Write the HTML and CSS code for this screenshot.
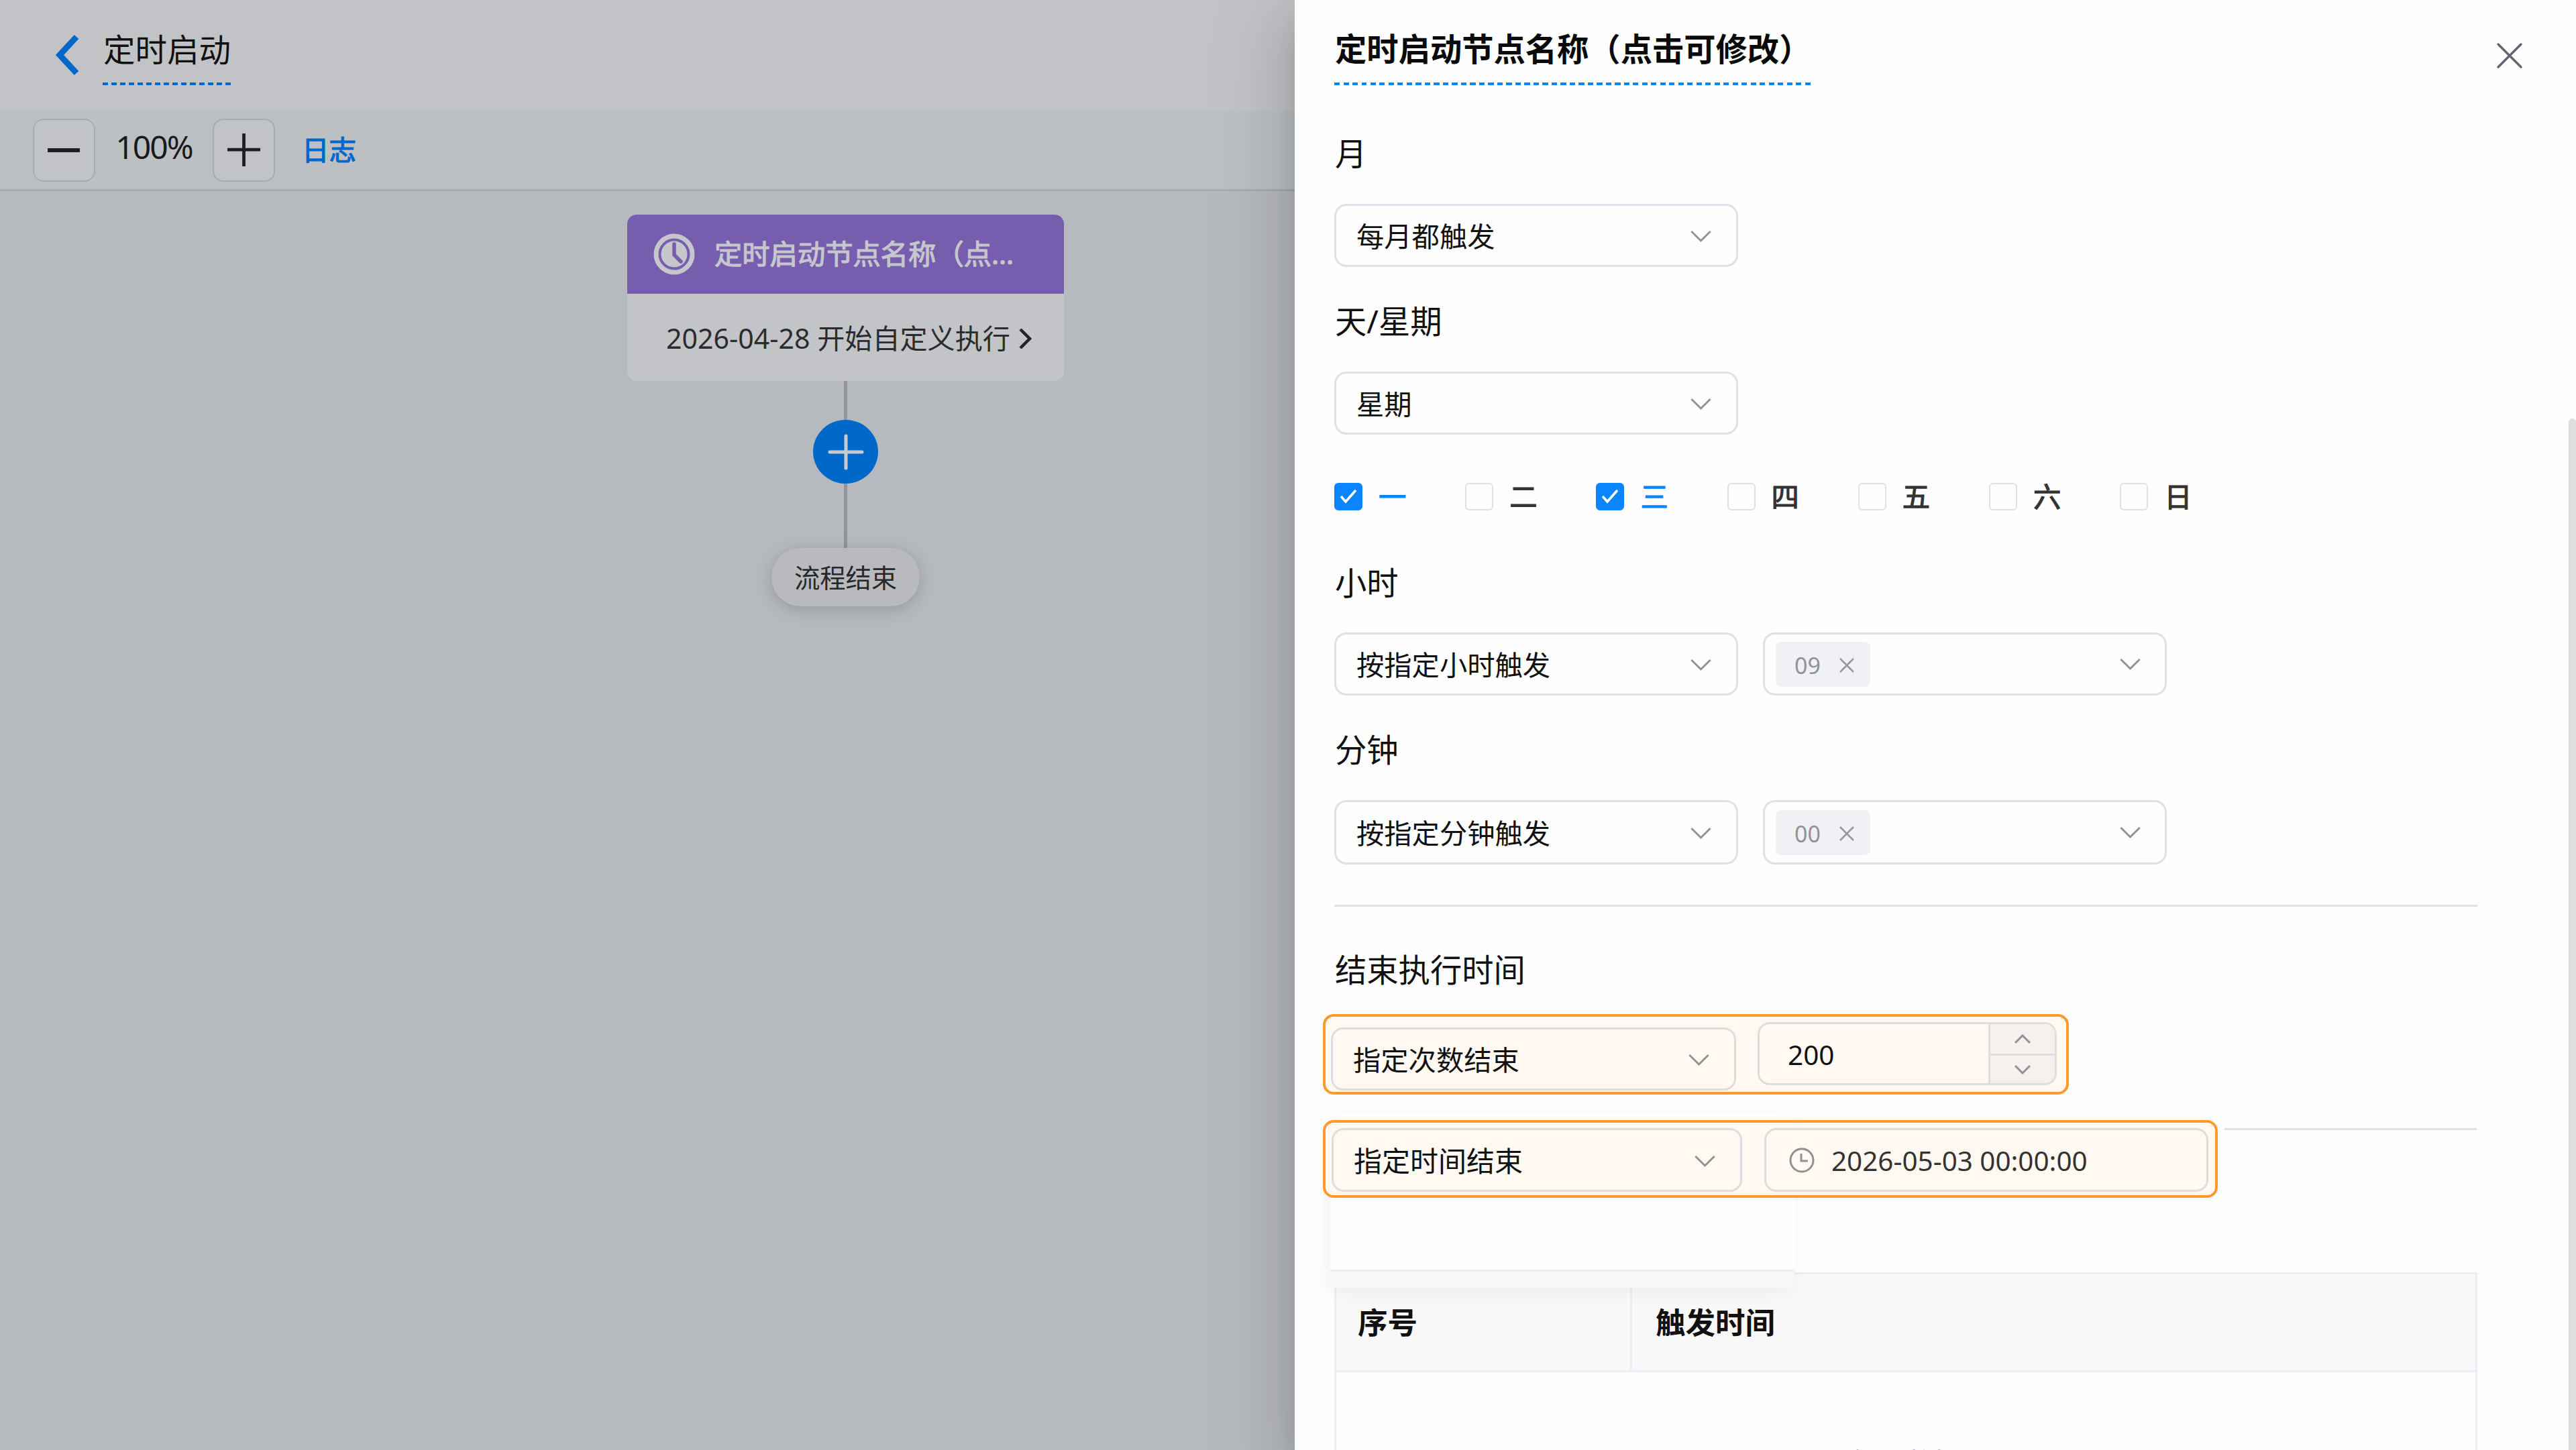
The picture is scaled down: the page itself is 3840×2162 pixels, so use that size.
FILE: index.html
```
<!DOCTYPE html>
<html lang="zh-CN">
<head>
  <meta charset="UTF-8">
  <meta name="viewport" content="width=device-width, initial-scale=1.0">
  <title>定时启动</title>
  <link rel="stylesheet" href="styles.css">
</head>
<body>

  <!-- 流程画布 -->
  <div class="flow">
    <header class="flow-header">
      <svg class="back" viewBox="0 0 36 60"><path d="M32 3 L7 30 L32 57" fill="none" stroke="#0068c9" stroke-width="9"/></svg>
      <span class="flow-name">定时启动</span>
    </header>
    <div class="toolbar">
      <button class="zoom-btn"><svg viewBox="0 0 52 52"><path d="M0 26H50" stroke="#1d1f21" stroke-width="6"/></svg></button>
      <span class="zoom-value">100%</span>
      <button class="zoom-btn"><svg viewBox="0 0 52 52"><path d="M0 25H51M25.5 0V51" stroke="#1d1f21" stroke-width="5"/></svg></button>
      <a class="log">日志</a>
    </div>
    <div class="canvas">
      <div class="node">
        <div class="node-head">
          <svg class="node-clock" viewBox="0 0 62 62">
            <circle cx="31" cy="31" r="27" fill="none" stroke="#c5c7cd" stroke-width="7"/>
            <circle cx="31" cy="31" r="19.5" fill="#c5c7cd"/>
            <path d="M31 16V32L41 42" fill="none" stroke="#775dad" stroke-width="5.5" stroke-linecap="round"/>
          </svg>
          <span>定时启动节点名称（点...</span>
        </div>
        <div class="node-body">
          <span>2026-04-28 开始自定义执行</span>
          <svg viewBox="0 0 20 32"><path d="M2 2L16 16L2 30" fill="none" stroke="#222426" stroke-width="4.5"/></svg>
        </div>
      </div>
      <div class="line line-top"></div>
      <div class="add"><svg viewBox="0 0 52 52"><path d="M2 26H50M26 2V50" stroke="#c9cbce" stroke-width="5" stroke-linecap="round"/></svg></div>
      <div class="line line-bottom"></div>
      <div class="end">流程结束</div>
    </div>
  </div>

  <!-- 定时设置抽屉 -->
  <div class="drawer">
    <div class="drawer-head">
      <h2>定时启动节点名称（点击可修改）</h2>
      <svg class="close" viewBox="0 0 38 38"><path d="M2 2L36 36M36 2L2 36" stroke="#606570" stroke-width="3.4" stroke-linecap="round"/></svg>
    </div>

    <div class="label">月</div>
    <div class="row">
      <div class="select"><span>每月都触发</span><svg class="arrow" viewBox="0 0 32 18"><path d="M1 1L16 16L31 1"/></svg></div>
    </div>

    <div class="label">天/星期</div>
    <div class="row">
      <div class="select"><span>星期</span><svg class="arrow" viewBox="0 0 32 18"><path d="M1 1L16 16L31 1"/></svg></div>
    </div>

    <div class="week">
      <label class="day checked"><i><svg viewBox="0 0 26 22"><path d="M2 11L9 19L24 2"/></svg></i>一</label>
      <label class="day"><i></i>二</label>
      <label class="day checked"><i><svg viewBox="0 0 26 22"><path d="M2 11L9 19L24 2"/></svg></i>三</label>
      <label class="day"><i></i>四</label>
      <label class="day"><i></i>五</label>
      <label class="day"><i></i>六</label>
      <label class="day"><i></i>日</label>
    </div>

    <div class="label label-hour">小时</div>
    <div class="row">
      <div class="select"><span>按指定小时触发</span><svg class="arrow" viewBox="0 0 32 18"><path d="M1 1L16 16L31 1"/></svg></div>
      <div class="select multi">
        <span class="tag">09<svg viewBox="0 0 22 22"><path d="M1 1L21 21M21 1L1 21"/></svg></span>
        <svg class="arrow" viewBox="0 0 32 18"><path d="M1 1L16 16L31 1"/></svg>
      </div>
    </div>

    <div class="label">分钟</div>
    <div class="row row-minute">
      <div class="select"><span>按指定分钟触发</span><svg class="arrow" viewBox="0 0 32 18"><path d="M1 1L16 16L31 1"/></svg></div>
      <div class="select multi">
        <span class="tag">00<svg viewBox="0 0 22 22"><path d="M1 1L21 21M21 1L1 21"/></svg></span>
        <svg class="arrow" viewBox="0 0 32 18"><path d="M1 1L16 16L31 1"/></svg>
      </div>
    </div>

    <div class="divider"></div>

    <div class="label label-end">结束执行时间</div>
    <div class="mark mark-count">
      <div class="select"><span>指定次数结束</span><svg class="arrow" viewBox="0 0 32 18"><path d="M1 1L16 16L31 1"/></svg></div>
      <div class="number">
        <span>200</span>
        <div class="steps">
          <div><svg viewBox="0 0 24 13"><path d="M1 12L12 1L23 12"/></svg></div>
          <div><svg viewBox="0 0 24 13"><path d="M1 1L12 12L23 1"/></svg></div>
        </div>
      </div>
    </div>

    <div class="time-row">
      <div class="mark mark-time">
        <div class="select"><span>指定时间结束</span><svg class="arrow" viewBox="0 0 32 18"><path d="M1 1L16 16L31 1"/></svg></div>
        <div class="picker">
          <svg viewBox="0 0 38 38"><circle cx="19" cy="19" r="17"/><path d="M18 9V20H28"/></svg>
          <span>2026-05-03 00:00:00</span>
        </div>
      </div>
      <div class="divider divider-rest"></div>
      <div class="popup"></div>
    </div>

    <div class="table">
      <div class="thead">
        <div class="th th-index">序号</div>
        <div class="th">触发时间</div>
      </div>
      <div class="tbody">暂无数据</div>
    </div>

    <div class="scrollbar"></div>
  </div>

</body>
</html>
```

FILE: styles.css
```
* {
  box-sizing: border-box;
}

body {
  margin: 0;
  width: 3840px;
  height: 2162px;
  display: flex;
  overflow: hidden;
  font-family: 'Noto Sans', 'Noto Sans CJK SC', sans-serif;
  font-size: 41.3px;
  line-height: 1;
  color: #1a1a1a;
  background: #b6b9be;
}

svg {
  display: block;
  flex: none;
  overflow: visible;
}

/* 左侧画布 */
.flow {
  width: 1930px;
  height: 2162px;
  flex: none;
}

.flow-header {
  height: 166px;
  padding: 52px 0 0 82px;
  display: flex;
  background: #c2c3c6;
}

.back {
  width: 36px;
  height: 60px;
}

.flow-name {
  height: 75px;
  margin-left: 35px;
  font-size: 47.5px;
  line-height: 43px;
  text-indent: 1px;
  color: #111;
  background: repeating-linear-gradient(90deg, #0068c9 0 8px, transparent 8px 13.05px) left bottom / 100% 4px no-repeat;
}

.toolbar {
  height: 119px;
  padding: 11px 0 0 49px;
  display: flex;
  background: #bcc0c3;
  border-bottom: 3px solid #a9abaf;
}

.zoom-btn {
  width: 93px;
  height: 94px;
  padding: 0;
  display: flex;
  align-items: center;
  justify-content: center;
  background: #c2c3c6;
  border: 2px solid #a7abb3;
  border-radius: 16px;
}

.zoom-btn svg {
  width: 50px;
  height: 50px;
}

.zoom-value {
  width: 175px;
  text-align: center;
  font-size: 48px;
  letter-spacing: -2px;
  line-height: 84px;
}

.log {
  margin-left: 40px;
  -webkit-text-stroke: 1.2px currentColor;
  line-height: 93px;
  font-size: 40.5px;
  color: #0068c9;
}

.canvas {
  padding: 35px 0 0 935px;
  display: flex;
  flex-direction: column;
}

.node {
  width: 651px;
  height: 248px;
  border-radius: 14px;
  overflow: hidden;
  background: #c3c4c7;
}

.node-head {
  height: 118px;
  padding-left: 39px;
  display: flex;
  align-items: center;
  background: #775dad;
  color: #c5c7cd;
}

.node-head span {
  -webkit-text-stroke: 1.2px currentColor;
}

.node-head svg {
  width: 62px;
  height: 62px;
  margin-right: 29px;
}

.node-body {
  height: 129px;
  padding: 5px 0 0 58px;
  display: flex;
  align-items: center;
  font-size: 41.1px;
  color: #2a2c2e;
}

.node-body svg {
  width: 20px;
  height: 32px;
  margin-left: 13px;
}

.line {
  width: 5px;
  margin-left: 323px;
  background: #939496;
}

.line-top {
  height: 58px;
}

.line-bottom {
  height: 96px;
}

.add {
  width: 97px;
  height: 95px;
  margin-left: 277px;
  display: flex;
  align-items: center;
  justify-content: center;
  border-radius: 50%;
  background: #0068c9;
}

.add svg {
  width: 52px;
  height: 52px;
}

.end {
  width: 221px;
  height: 87px;
  margin-left: 215px;
  border-radius: 44px;
  background: #b8babd;
  box-shadow: 0 5px 24px rgba(0, 0, 0, 0.18);
  font-size: 38.3px;
  line-height: 88px;
  text-align: center;
  color: #26282a;
}

/* 抽屉 */
.drawer {
  position: relative;
  width: 1910px;
  height: 2162px;
  flex: none;
  padding-left: 59px;
  background: #fefefe;
  box-shadow: 0 38px 110px 38px rgba(0, 0, 0, 0.08), 0 28px 76px rgba(0, 0, 0, 0.12), 0 18px 38px -18px rgba(0, 0, 0, 0.16);
}

.drawer-head {
  height: 189px;
  display: flex;
  justify-content: space-between;
}

.drawer-head h2 {
  width: 710px;
  height: 127px;
  margin: 0;
  padding-top: 49px;
  font-size: 47.3px;
  line-height: 48px;
  font-weight: 700;
  white-space: nowrap;
  text-indent: 1px;
  color: #0a0a0a;
  background: repeating-linear-gradient(90deg, #0a84ff 0 8px, transparent 8px 13.5px) left bottom / 100% 4px no-repeat;
}

.close {
  width: 38px;
  height: 38px;
  margin: 64px 80px 0 0;
}

.label {
  height: 115px;
  padding: 16px 0 0 1px;
  font-size: 47.3px;
  line-height: 48px;
  color: #111;
}

.row {
  display: flex;
  gap: 37px;
  height: 135px;
}

.select,
.picker,
.number {
  width: 602px;
  height: 94px;
  display: flex;
  align-items: center;
  border: 3px solid #dfe1e9;
  border-radius: 18px;
  color: #111;
}

.row-minute .select {
  height: 96px;
}

.select {
  padding: 3px 37px 0 30px;
  justify-content: space-between;
}

.arrow {
  width: 31px;
  height: 17px;
}

.arrow path,
.steps path,
.picker path,
.picker circle {
  fill: none;
  stroke: #8f9194;
  stroke-width: 3;
}

.select.multi {
  padding: 0 36px 0 16px;
}

.tag {
  width: 141px;
  height: 67px;
  padding: 3px 0 0 28px;
  display: flex;
  align-items: center;
  gap: 28px;
  border-radius: 8px;
  background: #f0f1f5;
  font-size: 34px;
  color: #909399;
}

.tag svg {
  width: 22px;
  height: 22px;
}

.tag path {
  stroke: #95989d;
  stroke-width: 2.6;
}

.week {
  height: 140px;
  padding-top: 30px;
  display: flex;
}

.day {
  width: 195.2px;
  height: 42px;
  display: flex;
  align-items: center;
  gap: 24px;
  line-height: 48px;
  color: #333;
  -webkit-text-stroke: 1.2px currentColor;
}

.day i {
  width: 42px;
  height: 41px;
  display: flex;
  align-items: center;
  justify-content: center;
  border: 2px solid #dfe1e9;
  border-radius: 6px;
}

.day.checked {
  color: #0a84ff;
}

.day.checked i {
  background: #0a84ff;
  border-color: #0a84ff;
}

.day i svg {
  width: 26px;
  height: 22px;
}

.day i path {
  fill: none;
  stroke: #fff;
  stroke-width: 3.5;
}

.label-hour {
  height: 114px;
}

.divider {
  width: 1704px;
  height: 3px;
  margin-top: 21px;
  background: #dfe1e9;
}

.label-end {
  height: 160px;
  padding-top: 70px;
}

/* 高亮框 */
.mark {
  margin-left: -17px;
  display: flex;
  border: 4px solid #ff992e;
  border-radius: 16px;
  background: #fff9f2;
}

.mark .select,
.mark .picker,
.mark .number {
  border-color: #dfdddd;
}

.mark-count {
  width: 1112px;
  height: 120px;
  padding: 8px 0 0 8px;
  gap: 32px;
}

.mark-count .select {
  width: 604px;
  margin-top: 8px;
}

.number {
  width: 446px;
  justify-content: space-between;
  padding-left: 42px;
  overflow: hidden;
}

.number span {
  padding-top: 4px;
  font-size: 40.5px;
}

.steps {
  width: 99px;
  height: 88px;
  border-left: 3px solid #dfdddd;
  background: #f5f1ee;
}

.steps div {
  height: 44px;
  display: flex;
  align-items: center;
  justify-content: center;
}

.steps div + div {
  border-top: 3px solid #dfdddd;
}

.steps svg {
  width: 24px;
  height: 13px;
}

.time-row {
  position: relative;
  margin-top: 38px;
  height: 227px;
  display: flex;
}

.mark-time {
  position: relative;
  z-index: 2;
  width: 1334px;
  height: 116px;
  padding: 8px 0 0 9px;
  gap: 33px;
}

.mark-time .select {
  width: 612px;
  height: 95px;
  font-size: 42px;
}

.picker {
  width: 662px;
  height: 95px;
  padding-left: 34px;
  gap: 25px;
}

.picker svg {
  width: 38px;
  height: 38px;
}

.picker span {
  padding-top: 4px;
  font-size: 40.4px;
  color: #333;
}

.divider-rest {
  width: 376px;
  margin: 12px 0 0 10px;
}

.popup {
  position: absolute;
  z-index: 1;
  left: -6px;
  top: -10px;
  width: 692px;
  height: 260px;
  background: linear-gradient(#fefefe 233px, #ebeef5 233px 236px, #f7f7f7 236px);
  box-shadow: -5px 6px 28px -4px rgba(0, 0, 0, 0.07);
}

.table {
  width: 1704px;
  height: 280px;
  border: 3px solid #ebeef5;
}

.thead {
  height: 146px;
  display: flex;
  background: #f8f8f8;
  border-bottom: 3px solid #ebeef5;
}

.th {
  padding: 50px 0 0 35px;
  font-size: 44.5px;
  font-weight: 700;
  color: #111;
}

.th-index {
  width: 441px;
  border-right: 3px solid #ebeef5;
  padding-left: 32px;
}

.tbody {
  padding-top: 114px;
  text-align: center;
  color: #909399;
}

.scrollbar {
  position: absolute;
  right: 0;
  top: 624px;
  width: 11px;
  height: 1538px;
  border-radius: 6px 6px 0 0;
  background: #dddee0;
}
```
